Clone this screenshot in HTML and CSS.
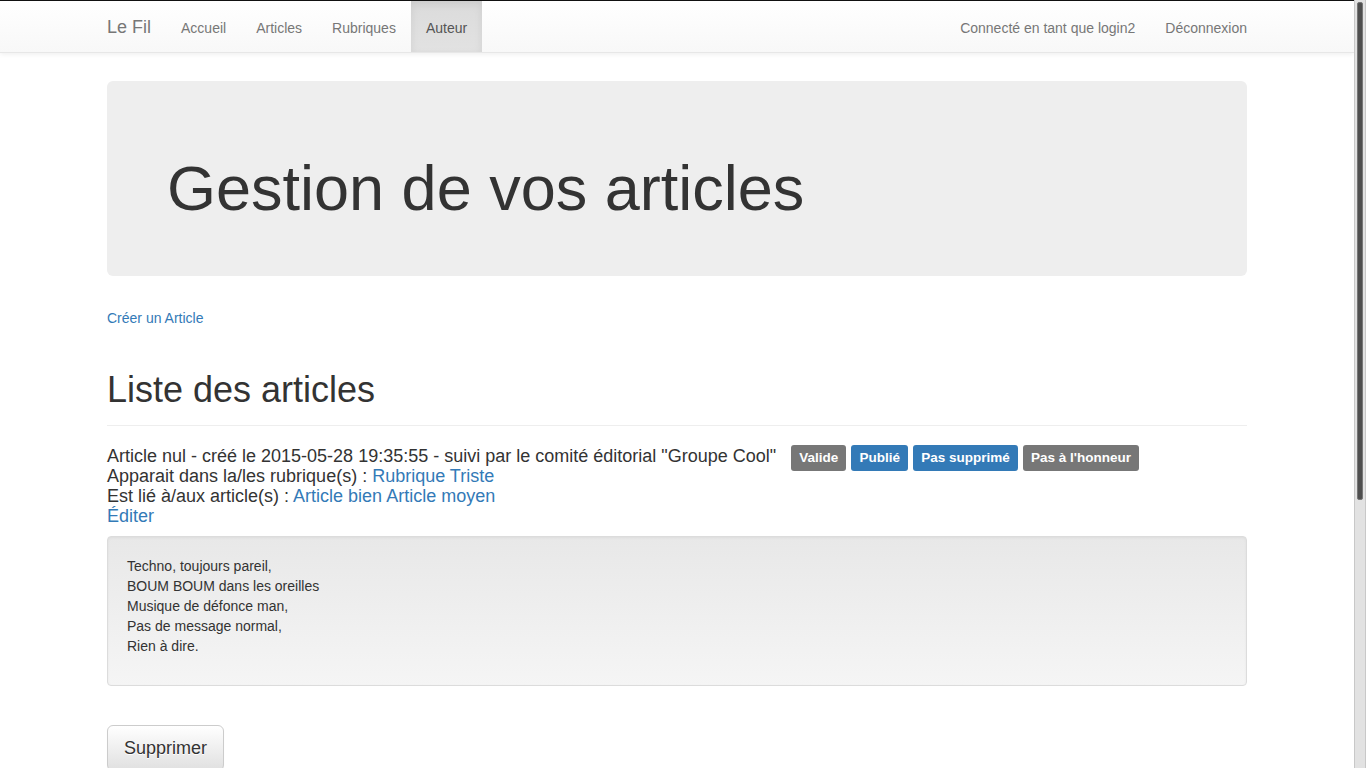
FILE: index.html
```html
<!DOCTYPE html>
<html lang="fr">
<head>
<meta charset="utf-8">
<title>Le Fil</title>
<link rel="stylesheet" href="styles.css">
</head>
<body>
<nav class="navbar">
  <div class="container nav-inner">
    <div class="nav-left">
      <a class="brand" href="#">Le Fil</a>
      <ul class="nav">
        <li><a href="#">Accueil</a></li>
        <li><a href="#">Articles</a></li>
        <li><a href="#">Rubriques</a></li>
        <li class="active"><a href="#">Auteur</a></li>
      </ul>
    </div>
    <ul class="nav nav-right">
      <li><a href="#">Connecté en tant que login2</a></li>
      <li><a href="#">Déconnexion</a></li>
    </ul>
  </div>
</nav>
<main class="container main">
  <div class="jumbotron">
    <h1>Gestion de vos articles</h1>
  </div>
  <p class="create"><a href="#">Créer un Article</a></p>
  <div class="page-header">
    <h1>Liste des articles</h1>
  </div>
  <div class="article">
    <div class="art-line">Article nul - créé le 2015-05-28 19:35:55 - suivi par le comité éditorial "Groupe Cool" <span class="labels"><span class="label label-default">Valide</span> <span class="label label-primary">Publié</span> <span class="label label-primary">Pas supprimé</span> <span class="label label-default">Pas à l'honneur</span></span></div>
    <div class="art-line">Apparait dans la/les rubrique(s) : <a href="#">Rubrique Triste</a></div>
    <div class="art-line">Est lié à/aux article(s) : <a href="#">Article bien</a> <a href="#">Article moyen</a></div>
    <div class="art-line"><a href="#">Éditer</a></div>
  </div>
  <div class="well">
    <p>Techno, toujours pareil,<br>BOUM BOUM dans les oreilles<br>Musique de défonce man,<br>Pas de message normal,<br>Rien à dire.</p>
  </div>
  <button class="btn" type="button">Supprimer</button>
</main>
<div class="scrollbar" aria-hidden="true"><div class="thumb"></div></div>
</body>
</html>
```
FILE: styles.css
```css
* { box-sizing: border-box; }
html, body { margin: 0; padding: 0; }
body {
  font-family: "Liberation Sans", Arial, sans-serif;
  font-size: 14px;
  line-height: 20px;
  color: #333;
  background: #fff;
  border-top: 1px solid #111;
  padding-right: 12px;
}
a { color: #337ab7; text-decoration: none; }
.container {
  width: 1140px;
  margin: 0 auto;
}
.navbar {
  height: 52px;
  background: linear-gradient(to bottom, #fff 0, #f8f8f8 100%);
  border-bottom: 1px solid #e7e7e7;
  box-shadow: inset 0 1px 0 rgba(255,255,255,.15), 0 1px 5px rgba(0,0,0,.075);
}
.nav-inner {
  display: flex;
  justify-content: space-between;
  height: 51px;
}
.nav-left { display: flex; }
.brand {
  display: block;
  padding: 16px 15px 15px 0;
  font-size: 18px;
  line-height: 20px;
  height: 51px;
  color: #777;
}
.nav {
  display: flex;
  list-style: none;
  margin: 0;
  padding: 0;
}
.nav li a {
  display: block;
  padding: 17px 15px 14px;
  height: 51px;
  color: #777;
}
.nav li.active a {
  color: #555;
  background: linear-gradient(to bottom, #dbdbdb 0, #e2e2e2 100%);
  box-shadow: inset 0 3px 9px rgba(0,0,0,.075);
}
.nav-right li:last-child a { padding-right: 0; }
.main { padding-top: 28px; padding-bottom: 40px; }
.jumbotron {
  background: #eee;
  border-radius: 6px;
  padding: 48px 60px;
  height: 195px;
}
.jumbotron h1 {
  margin: 25px 0 0;
  font-size: 63px;
  font-weight: 500;
  line-height: 69px;
}
.create { margin: 32px 0 0; }
.page-header {
  margin: 42px 0 20px;
  padding-bottom: 15px;
  border-bottom: 1px solid #eee;
}
.page-header h1 {
  margin: 0;
  font-size: 36px;
  font-weight: 500;
  line-height: 40px;
}
.article { font-size: 18px; line-height: 20px; margin-bottom: 10px; }
.labels { margin-left: 10px; }
.label {
  display: inline;
  font-size: 13.5px;
  font-weight: bold;
  color: #fff;
  padding: 5px 0.6em 6px;
  border-radius: 3px;
  white-space: nowrap;
  line-height: 1;
}
.label-default { background: #777; }
.label-primary { background: #337ab7; }
.well {
  margin-top: 0;
  margin-bottom: 39px;
  padding: 19px;
  min-height: 20px;
  border: 1px solid #dcdcdc;
  border-radius: 4px;
  background: linear-gradient(to bottom, #e8e8e8 0, #f5f5f5 100%);
  box-shadow: inset 0 1px 3px rgba(0,0,0,.05), 0 1px 0 rgba(255,255,255,.1);
}
.well p { margin: 0 0 10px; }
.btn {
  font-family: inherit;
  font-size: 18px;
  line-height: 24px;
  padding: 10px 16px;
  color: #333;
  border: 1px solid #ccc;
  border-radius: 6px;
  background: linear-gradient(to bottom, #fff 0, #e0e0e0 100%);
  text-shadow: 0 1px 0 #fff;
  box-shadow: inset 0 1px 0 rgba(255,255,255,.15), 0 1px 1px rgba(0,0,0,.075);
  cursor: pointer;
}
.scrollbar {
  position: fixed;
  top: 0;
  right: 0;
  width: 12px;
  height: 100vh;
  background: #e2e2e2;
  border-left: 1px solid #c8c8c8;
  border-right: 1px solid #c8c8c8;
  padding: 2px 2px 0;
}
.thumb {
  height: 498px;
  background: #4f4f4f;
  border: 1px solid #777;
  border-radius: 2px;
}
```
